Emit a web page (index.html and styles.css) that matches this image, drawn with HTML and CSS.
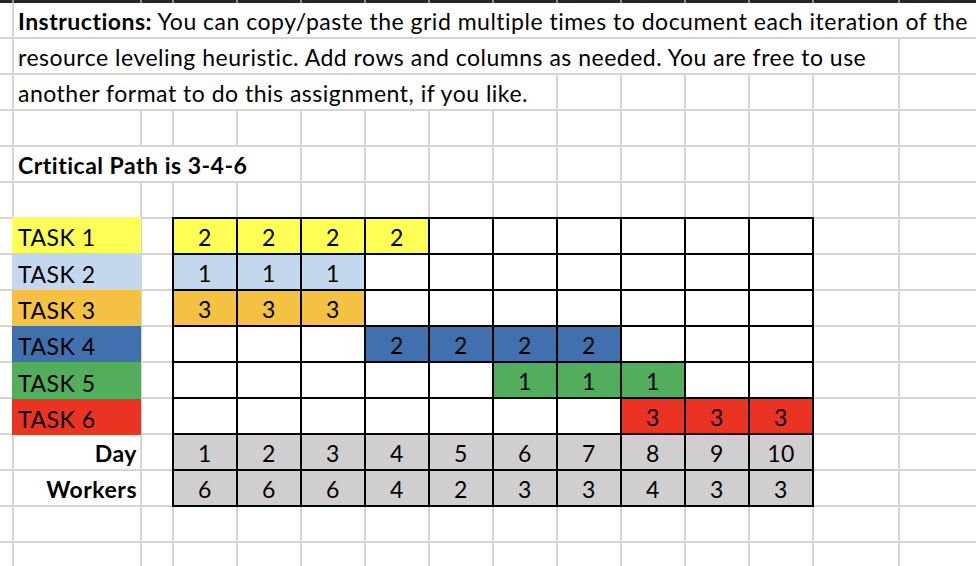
FILE: index.html
```html
<!DOCTYPE html>
<html>
<head>
<meta charset="utf-8">
<link rel="stylesheet" href="styles.css">
</head>
<body>
<div class="topbar">
  <i></i><i></i><i></i><i></i><i></i><i></i><i></i><i></i><i></i><i></i><i></i><i></i><i></i><i></i><i></i>
</div>
<div class="sheet">
  <div class="txt r1"><span><b>Instructions:</b> You can copy/paste the grid multiple times to document each iteration of the</span></div>
  <div class="txt r2"><span>resource leveling heuristic. Add rows and columns as needed. You are free to use</span></div>
  <div class="txt r3"><span>another format to do this assignment, if you like.</span></div>
  <div class="txt r5"><span><b>Crtitical Path is 3-4-6</b></span></div>

  <div class="tasks">
    <div class="task t-yellow">TASK 1</div>
    <div class="task t-lblue">TASK 2</div>
    <div class="task t-orange">TASK 3</div>
    <div class="task t-blue">TASK 4</div>
    <div class="task t-green">TASK 5</div>
    <div class="task t-red">TASK 6</div>
  </div>
  <div class="txt rlabel r13"><b>Day</b></div>
  <div class="txt rlabel r14"><b>Workers</b></div>

  <div class="table">
    <div class="t-yellow">2</div><div class="t-yellow">2</div><div class="t-yellow">2</div><div class="t-yellow">2</div><div></div><div></div><div></div><div></div><div></div><div></div>
    <div class="t-lblue">1</div><div class="t-lblue">1</div><div class="t-lblue">1</div><div></div><div></div><div></div><div></div><div></div><div></div><div></div>
    <div class="t-orange">3</div><div class="t-orange">3</div><div class="t-orange">3</div><div></div><div></div><div></div><div></div><div></div><div></div><div></div>
    <div></div><div></div><div></div><div class="t-blue">2</div><div class="t-blue">2</div><div class="t-blue">2</div><div class="t-blue">2</div><div></div><div></div><div></div>
    <div></div><div></div><div></div><div></div><div></div><div class="t-green">1</div><div class="t-green">1</div><div class="t-green">1</div><div></div><div></div>
    <div></div><div></div><div></div><div></div><div></div><div></div><div></div><div class="t-red">3</div><div class="t-red">3</div><div class="t-red">3</div>
    <div class="t-gray">1</div><div class="t-gray">2</div><div class="t-gray">3</div><div class="t-gray">4</div><div class="t-gray">5</div><div class="t-gray">6</div><div class="t-gray">7</div><div class="t-gray">8</div><div class="t-gray">9</div><div class="t-gray">10</div>
    <div class="t-gray">6</div><div class="t-gray">6</div><div class="t-gray">6</div><div class="t-gray">4</div><div class="t-gray">2</div><div class="t-gray">3</div><div class="t-gray">3</div><div class="t-gray">4</div><div class="t-gray">3</div><div class="t-gray">3</div>
  </div>

  <!-- empty cells (auto-placed) -->
  <i></i>
  <i></i><i></i>
  <i></i><i></i><i></i><i></i><i></i><i></i><i></i>
  <i></i><i></i><i></i><i></i><i></i><i></i><i></i><i></i><i></i><i></i><i></i><i></i><i></i><i></i><i></i>
  <i></i><i></i><i></i><i></i><i></i><i></i><i></i><i></i><i></i><i></i><i></i>
  <i></i><i></i><i></i><i></i><i></i><i></i><i></i><i></i><i></i><i></i><i></i><i></i><i></i><i></i><i></i>
  <i></i><i></i><i></i><i></i>
  <i></i><i></i><i></i><i></i>
  <i></i><i></i><i></i><i></i>
  <i></i><i></i><i></i><i></i>
  <i></i><i></i><i></i><i></i>
  <i></i><i></i><i></i><i></i>
  <i></i><i></i><i></i><i></i>
  <i></i><i></i><i></i><i></i>
  <i></i><i></i><i></i><i></i><i></i><i></i><i></i><i></i><i></i><i></i><i></i><i></i><i></i><i></i><i></i>
  <i></i><i></i><i></i><i></i><i></i><i></i><i></i><i></i><i></i><i></i><i></i><i></i><i></i><i></i><i></i>
</div>
</body>
</html>
```

FILE: styles.css
```css
html, body {
  margin: 0;
  padding: 0;
  background: #ffffff;
  overflow: hidden;
}
body {
  width: 976px;
  height: 566px;
  font-family: Lato, "Open Sans", sans-serif;
  font-size: 23px;
  letter-spacing: 0.5px;
  color: #000;
}
.topbar {
  display: grid;
  grid-template-columns: 12px 126px 30px repeat(10, 62px) 84px 1fr;
  column-gap: 2px;
  height: 3px;
  background: #8c8c8c;
}
.topbar i {
  display: block;
  background: #262626;
}
.sheet {
  display: grid;
  grid-template-columns: 12px 126px 30px repeat(10, 62px) 84px 1fr;
  grid-auto-rows: 34px;
  gap: 2px;
  background: #d5d5d5;
  height: 563px;
  overflow: hidden;
}
.sheet > i {
  display: block;
  background: #fff;
}
.txt {
  background: #fff;
  display: flex;
  align-items: flex-end;
  white-space: nowrap;
  line-height: 23px;
  padding: 0 0 4px 4px;
  overflow: hidden;
}
.r1 { grid-row: 1; grid-column: 2 / span 14; }
.r2 { grid-row: 2; grid-column: 2 / span 13; }
.r3 { grid-row: 3; grid-column: 2 / span 8; }
.r5 { grid-row: 5; grid-column: 2 / span 4; }
.rlabel {
  grid-column: 2;
  justify-content: flex-end;
  padding-right: 3px;
}
.r13 { grid-row: 13; }
.r14 { grid-row: 14; }

.tasks {
  grid-column: 2;
  grid-row: 7 / span 6;
  margin: -2px -1px -2px -2px;
  display: flex;
  flex-direction: column;
}
.task {
  flex: 1;
  display: flex;
  align-items: flex-end;
  line-height: 23px;
  padding: 0 0 4px 6px;
}

.table {
  grid-column: 4 / span 10;
  grid-row: 7 / span 8;
  margin: -2px;
  border: 2px solid #000;
  background: #000;
  display: grid;
  grid-template-columns: repeat(10, 1fr);
  grid-template-rows: repeat(8, 1fr);
  gap: 2px;
}
.table > div {
  background: #fff;
  display: flex;
  align-items: flex-end;
  justify-content: center;
  line-height: 23px;
  padding-bottom: 4px;
}

.t-yellow { background: #ffff55 !important; }
.t-lblue { background: #c3d8ee !important; }
.t-orange { background: #f5c143 !important; }
.t-blue { background: #4070ae !important; }
.t-green { background: #52ad5c !important; }
.t-red { background: #eb3324 !important; }
.t-gray { background: #d0cece !important; }
```
